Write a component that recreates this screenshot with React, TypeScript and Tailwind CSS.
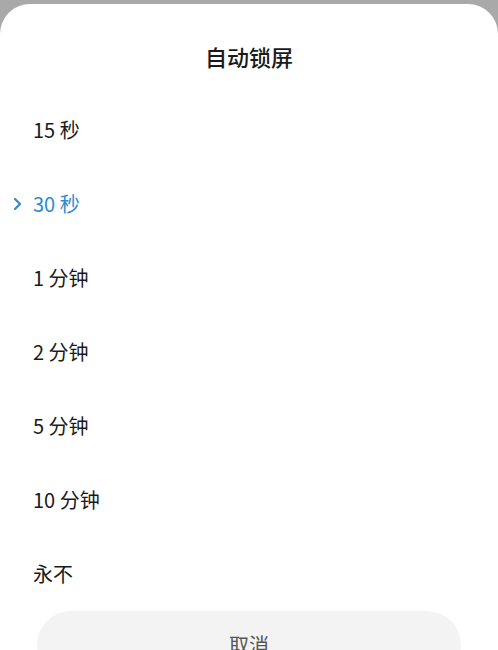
const options = ["15 秒", "30 秒", "1 分钟", "2 分钟", "5 分钟", "10 分钟", "永不"];
const selected = "30 秒";

const font = { fontFamily: '"Noto Sans CJK SC", "Noto Sans", Roboto, sans-serif' };

export default function App() {
  return (
    <div className="h-[650px] w-[498px] overflow-hidden bg-[#a9a9a9] pt-[4px]" style={font}>
      <div className="h-full rounded-t-[30px] bg-white">
        {/* Title */}
        <div className="pt-[37px] text-center text-[22px] leading-[30px] font-medium text-[#1a1a1a]">
          自动锁屏
        </div>

        {/* Options */}
        <div className="mt-[22px]">
          {options.map((opt) => {
            const active = opt === selected;
            return (
              <div key={opt} className="relative flex h-[74px] items-center pl-[33px]">
                {active && (
                  <svg
                    className="absolute left-[13px] top-[30px]"
                    width="10"
                    height="14"
                    viewBox="0 0 10 14"
                    fill="none"
                    stroke="#2e8bd0"
                    strokeWidth="2.2"
                    strokeLinecap="round"
                    strokeLinejoin="round"
                  >
                    <path d="M2 2l5 5-5 5" />
                  </svg>
                )}
                <span
                  className={
                    active
                      ? "text-[20px] leading-[28px] text-[#2e8bd0]"
                      : "text-[20px] leading-[28px] text-[#1a1a1a]"
                  }
                >
                  {opt}
                </span>
              </div>
            );
          })}
        </div>

        {/* Cancel */}
        <div className="mx-[37px] flex h-[68px] items-center justify-center rounded-[34px] bg-[#f3f3f3]">
          <span className="text-[20px] leading-[28px] text-[#555555]">取消</span>
        </div>
      </div>
    </div>
  );
}
